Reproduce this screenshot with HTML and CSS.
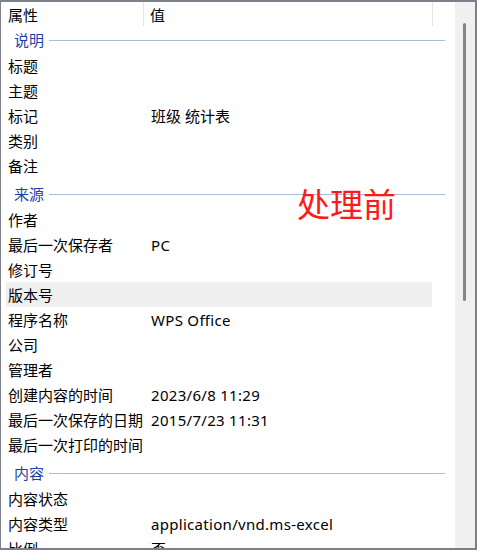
FILE: index.html
```html
<!DOCTYPE html>
<html lang="zh">
<head>
<meta charset="utf-8">
<link rel="stylesheet" href="styles.css">
</head>
<body>
<div class="frame">
  <div class="list">
    <div class="header">
      <div class="hcell c1">属性</div>
      <div class="hcell c2">值</div>
    </div>
    <div class="group first"><span>说明</span><i class="gline"></i></div>
    <div class="row"><div class="k">标题</div><div class="v"></div></div>
    <div class="row"><div class="k">主题</div><div class="v"></div></div>
    <div class="row"><div class="k">标记</div><div class="v">班级 统计表</div></div>
    <div class="row"><div class="k">类别</div><div class="v"></div></div>
    <div class="row"><div class="k">备注</div><div class="v"></div></div>
    <div class="group"><span>来源</span><i class="gline"></i></div>
    <div class="row"><div class="k">作者</div><div class="v"></div></div>
    <div class="row"><div class="k">最后一次保存者</div><div class="v lat">PC</div></div>
    <div class="row"><div class="k">修订号</div><div class="v"></div></div>
    <div class="row hl"><div class="k">版本号</div><div class="v"></div></div>
    <div class="row"><div class="k">程序名称</div><div class="v lat">WPS Office</div></div>
    <div class="row"><div class="k">公司</div><div class="v"></div></div>
    <div class="row"><div class="k">管理者</div><div class="v"></div></div>
    <div class="row"><div class="k">创建内容的时间</div><div class="v lat">2023/6/8 11:29</div></div>
    <div class="row"><div class="k">最后一次保存的日期</div><div class="v lat">2015/7/23 11:31</div></div>
    <div class="row"><div class="k">最后一次打印的时间</div><div class="v"></div></div>
    <div class="group"><span>内容</span><i class="gline"></i></div>
    <div class="row"><div class="k">内容状态</div><div class="v"></div></div>
    <div class="row"><div class="k">内容类型</div><div class="v lat">application/vnd.ms-excel</div></div>
    <div class="row"><div class="k">比例</div><div class="v">否</div></div>
    <div class="note">处理前</div>
  </div>
  <div class="scrollbar"><div class="thumb"></div></div>
</div>
</body>
</html>
```
FILE: styles.css
```css
html, body {
  margin: 0;
  padding: 0;
  background: #fff;
}
body {
  font-family: "Noto Sans", "Noto Sans CJK SC", sans-serif;
  font-size: 15px;
  color: #000;
}
.frame {
  width: 477px;
  height: 550px;
  box-sizing: border-box;
  border-top: 2px solid #7d8088;
  border-right: 2px solid #7d8088;
  border-bottom: 2px solid #7d8088;
  border-left: 1px solid #7d8088;
  display: flex;
  overflow: hidden;
}
.list {
  position: relative;
  flex: 1;
  overflow: hidden;
  background: #fff;
}
.header {
  display: flex;
  height: 26px;
  align-items: stretch;
}
.hcell {
  line-height: 27px;
  box-sizing: border-box;
}
.c1 {
  width: 143px;
  padding-left: 7px;
  border-right: 1px solid #e3e3e3;
  margin-bottom: 2px;
}
.c2 {
  width: 289px;
  padding-left: 6px;
  border-right: 1px solid #e3e3e3;
  margin-bottom: 2px;
}
.group {
  display: flex;
  align-items: center;
  height: 25px;
  margin-top: 4px;
  padding-left: 13px;
  color: #1e3fa8;
}
.group.first {
  margin-top: 0;
}
.group span {
  line-height: 25px;
}
.gline {
  display: block;
  width: 396px;
  height: 1px;
  margin-left: 5px;
  background: #abbbe0;
}
.row {
  display: flex;
  height: 25px;
  line-height: 26px;
  margin-left: 5px;
  width: 426px;
  white-space: nowrap;
}
.row.hl {
  background: #efefef;
}
.k {
  width: 138px;
  padding-left: 2px;
  box-sizing: border-box;
}
.v {
  padding-left: 7px;
}
.v.lat {
  letter-spacing: 0.3px;
}
.note {
  position: absolute;
  left: 296px;
  top: 179px;
  font-family: "Noto Sans CJK SC", sans-serif;
  font-size: 33px;
  line-height: 44px;
  color: #ff1a1a;
}
.scrollbar {
  width: 20px;
  background: #f0f0f0;
  position: relative;
}
.thumb {
  position: absolute;
  left: 8px;
  top: 21px;
  width: 3px;
  height: 278px;
  border-radius: 1.5px;
  background: #858585;
}
```
